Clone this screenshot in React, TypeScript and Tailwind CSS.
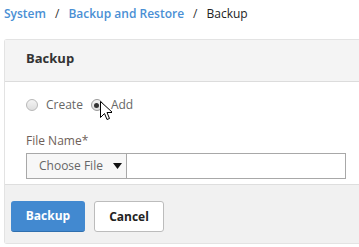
export default function App() {
  return (
    <div className="w-[359px] h-[247px] overflow-hidden bg-white font-['Open_Sans',sans-serif] relative">
      <nav className="flex items-center h-[27px] pl-[4px] text-[12px] leading-none">
        <span className="font-semibold text-[#4a8fd4]">System</span>
        <span className="mx-[9px] text-[#333]">/</span>
        <span className="font-semibold text-[#4a8fd4]">Backup and Restore</span>
        <span className="mx-[9px] text-[#333]">/</span>
        <span className="text-[#222]">Backup</span>
      </nav>

      <div className="ml-[4px] mt-[12px] border border-[#e3e3e3] border-r-0 rounded-tl-[3px] rounded-bl-[3px]">
        <div className="h-[42px] bg-[#f4f4f4] border-b border-[#dcdcdc] flex items-center pl-[21px] pb-[3px]">
          <span className="text-[13px] font-bold text-[#333]">Backup</span>
        </div>

        <div className="px-[21px] pt-[13px] pb-[5px]">
          <div className="flex items-center h-[20px] text-[12px] text-[#666]">
            <span className="w-[12px] h-[12px] rounded-full border border-[#b8b8b8] bg-gradient-to-b from-[#f4f4f4] to-[#dedede]" />
            <span className="ml-[8px]">Create</span>
            <span className="ml-[8px] w-[12px] h-[12px] rounded-full border border-[#9a9a9a] bg-gradient-to-b from-[#f4f4f4] to-[#dedede] flex items-center justify-center">
              <span className="w-[5px] h-[5px] rounded-full bg-[#333]" />
            </span>
            <span className="ml-[8px]">Add</span>
          </div>

          <div className="mt-[18px] text-[12px] text-[#6e6058] leading-[16px]">File Name*</div>

          <div className="mt-[4px] flex h-[26px] w-[320px] border border-[#a8a8a8]">
            <div className="w-[100px] bg-[#f7f7f7] border-r border-[#a8a8a8] flex items-center pl-[12px] text-[12px] text-[#666] whitespace-nowrap">
              Choose File
              <svg className="ml-[10px] shrink-0" width="9" height="6" viewBox="0 0 9 6">
                <path d="M0 0h9L4.5 6z" fill="#111" />
              </svg>
            </div>
            <div className="flex-1 bg-white" />
          </div>
        </div>

        <div className="bg-[#f1f1f1] border-t border-[#dedede] h-[59px] flex items-start pt-[16px] pl-[6px] gap-[9px]">
          <button className="w-[74px] h-[31px] rounded-[3px] bg-[#4289d0] border-b border-[#2f6fae] text-white text-[12px] font-bold">
            Backup
          </button>
          <button className="w-[70px] h-[31px] rounded-[3px] bg-white border border-[#bcbcbc] text-[#222] text-[12px] font-bold">
            Cancel
          </button>
        </div>
      </div>

      <svg className="absolute left-[100px] top-[101px]" width="12" height="20" viewBox="0 0 12 20">
        <path d="M0.5 0.5v16l4-4 2.5 6 2.5-1-2.5-6h5.5z" fill="#fff" stroke="#000" strokeWidth="1" strokeLinejoin="round" />
      </svg>
    </div>
  );
}
